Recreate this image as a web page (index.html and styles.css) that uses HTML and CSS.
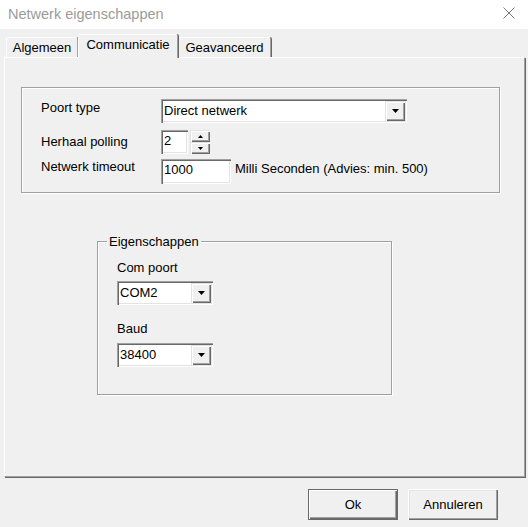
FILE: index.html
```html
<!DOCTYPE html>
<html>
<head>
<meta charset="utf-8">
<link rel="stylesheet" href="styles.css">
</head>
<body>
<div class="window">
  <div class="titlebar">
    <span class="title">Netwerk eigenschappen</span>
    <svg class="close" width="12" height="12" viewBox="0 0 12 12"><path d="M0.5 0.5L11.5 11.5M11.5 0.5L0.5 11.5" stroke="#7a7a7a" stroke-width="1" fill="none"/></svg>
  </div>
  <div class="client">
    <div class="tabs">
      <div class="tab tab-alg">Algemeen</div>
      <div class="tab tab-com selected">Communicatie</div>
      <div class="tab tab-gev">Geavanceerd</div>
    </div>
    <div class="panel">
      <div class="group1">
        <div class="row row1">
          <div class="label lab1">Poort type</div>
          <div class="combo combo-wide">
            <div class="combo-text">Direct netwerk</div>
            <div class="drop"><svg width="7" height="4" viewBox="0 0 7 4"><path d="M0 0H7L3.5 4Z" fill="#000"/></svg></div>
          </div>
        </div>
        <div class="row row2">
          <div class="label lab2">Herhaal polling</div>
          <div class="field field-spin">2</div>
          <div class="spin">
            <div class="spin-btn"><svg width="5" height="3" viewBox="0 0 5 3"><path d="M2.5 0L5 3H0Z" fill="#000"/></svg></div>
            <div class="spin-btn"><svg width="5" height="3" viewBox="0 0 5 3"><path d="M0 0H5L2.5 3Z" fill="#000"/></svg></div>
          </div>
        </div>
        <div class="row row3">
          <div class="label lab3">Netwerk timeout</div>
          <div class="field field-timeout">1000</div>
          <div class="unit">Milli Seconden (Advies: min. 500)</div>
        </div>
      </div>
      <div class="group2">
        <div class="legend">Eigenschappen</div>
        <div class="g2-label g2-com">Com poort</div>
        <div class="combo combo-small combo-com">
          <div class="combo-text">COM2</div>
          <div class="drop"><svg width="7" height="4" viewBox="0 0 7 4"><path d="M0 0H7L3.5 4Z" fill="#000"/></svg></div>
        </div>
        <div class="g2-label g2-baud">Baud</div>
        <div class="combo combo-small combo-baud">
          <div class="combo-text">38400</div>
          <div class="drop"><svg width="7" height="4" viewBox="0 0 7 4"><path d="M0 0H7L3.5 4Z" fill="#000"/></svg></div>
        </div>
      </div>
    </div>
    <div class="buttons">
      <div class="btn btn-default">Ok</div>
      <div class="btn">Annuleren</div>
    </div>
  </div>
</div>
</body>
</html>
```
FILE: styles.css
```css
html, body {
  margin: 0;
  padding: 0;
}
body {
  width: 528px;
  height: 527px;
  overflow: hidden;
  background: #f0f0f0;
  font-family: "Liberation Sans", Arial, sans-serif;
  font-size: 13px;
  color: #000;
}
.window {
  width: 528px;
  height: 527px;
  background: #f0f0f0;
}
.titlebar {
  height: 29px;
  box-sizing: border-box;
  background: #fff;
  display: flex;
  justify-content: space-between;
  align-items: flex-start;
  padding: 0 13px 0 8px;
}
.title {
  font-size: 14.5px;
  line-height: 28px;
  color: #9b9b9b;
}
.close {
  margin-top: 7px;
  display: block;
}
.client {
  padding: 5px 0 0 4px;
}
.tabs {
  display: flex;
  align-items: flex-end;
  height: 23px;
  padding-left: 2px;
  position: relative;
  z-index: 1;
}
.tab {
  height: 20px;
  box-sizing: border-box;
  border-top: 1px solid #fff;
  border-left: 1px solid #fff;
  border-right: 1px solid #a0a0a0;
  box-shadow: 1px 0 0 #696969;
  border-radius: 2px 2px 0 0;
  text-align: center;
  line-height: 19px;
  background: #f0f0f0;
  white-space: nowrap;
}
.tab-alg { width: 72px; }
.tab-com { width: 100px; }
.tab-gev { width: 93px; }
.tab.selected {
  height: 24px;
  margin-bottom: -1px;
  line-height: 20px;
  position: relative;
  z-index: 2;
}
.panel {
  width: 521px;
  height: 420px;
  box-sizing: border-box;
  border-top: 1px solid #fff;
  border-left: 1px solid #fff;
  border-right: 1px solid #a0a0a0;
  border-bottom: 1px solid #a0a0a0;
  box-shadow: 1px 1px 0 #696969;
  padding: 29px 0 0 16px;
}
.group1 {
  width: 479px;
  box-sizing: border-box;
  border: 1px solid #a0a0a0;
  box-shadow: inset 1px 1px 0 #fff, 1px 1px 0 #fff;
  padding: 11px 0 8px 19px;
}
.row {
  display: flex;
  align-items: flex-start;
}
.row2 { margin-top: 7px; }
.row3 { margin-top: 5px; }
.label {
  width: 120px;
  line-height: 15px;
  white-space: nowrap;
}
.lab1 { margin-top: 1px; }
.lab2 { margin-top: 4px; }
.lab3 { margin-top: 0; }
.sunken {
}
.combo, .field {
  box-sizing: border-box;
  background: #fff;
  border-top: 1px solid #a0a0a0;
  border-left: 1px solid #a0a0a0;
  border-right: 1px solid #fff;
  border-bottom: 1px solid #fff;
  box-shadow: inset 1px 1px 0 #696969, inset -1px -1px 0 #e3e3e3;
}
.combo {
  height: 24px;
  display: flex;
  padding: 2px 2px 2px 2px;
  border: none;
  box-shadow: inset 1px 1px 0 #a0a0a0, inset 2px 2px 0 #696969, inset -1px -1px 0 #fff, inset -2px -2px 0 #e3e3e3;
}
.combo-text {
  flex: 1;
  line-height: 20px;
  padding-left: 1px;
  white-space: nowrap;
}
.combo-wide { width: 246px; }
.combo-small { width: 96px; }
.drop {
  width: 20px;
  height: 20px;
  box-sizing: border-box;
  background: #f0f0f0;
  box-shadow: inset 1px 1px 0 #e3e3e3, inset 2px 2px 0 #fff, inset -1px -1px 0 #696969, inset -2px -2px 0 #a0a0a0;
  display: flex;
  align-items: center;
  justify-content: center;
}
.drop svg { display: block; }
.field {
  height: 24px;
  padding: 1px 2px 0 3px;
  line-height: 15px;
  border: none;
  box-shadow: inset 1px 1px 0 #a0a0a0, inset 2px 2px 0 #696969, inset -1px -1px 0 #fff, inset -2px -2px 0 #e3e3e3;
  padding-top: 3px;
}
.field-spin { width: 27px; }
.field-timeout { width: 70px; height: 25px; }
.spin {
  margin-left: 2px;
  width: 20px;
  height: 24px;
  display: flex;
  flex-direction: column;
}
.spin-btn {
  height: 12px;
  box-sizing: border-box;
  background: #f0f0f0;
  box-shadow: inset 1px 1px 0 #e3e3e3, inset 2px 2px 0 #fff, inset -1px -1px 0 #696969, inset -2px -2px 0 #a0a0a0;
  display: flex;
  align-items: center;
  justify-content: center;
}
.spin-btn svg { display: block; }
.unit {
  margin-left: 4px;
  margin-top: 2px;
  line-height: 15px;
  white-space: nowrap;
}
.group2 {
  margin-left: 76px;
  margin-top: 48px;
  width: 295px;
  height: 154px;
  box-sizing: border-box;
  border: 1px solid #a0a0a0;
  box-shadow: inset 1px 1px 0 #fff, 1px 1px 0 #fff;
  padding: 0 0 0 19px;
}
.legend {
  width: fit-content;
  margin: -8px 0 0 -10px;
  padding: 0 2px;
  line-height: 15px;
  background: #f0f0f0;
}
.g2-label {
  line-height: 15px;
}
.g2-com { margin-top: 11px; }
.combo-com { margin-top: 6px; }
.g2-baud { margin-top: 16px; }
.combo-baud { margin-top: 7px; }
.buttons {
  display: flex;
  justify-content: flex-end;
  gap: 10px;
  padding-right: 30px;
  margin-top: 12px;
}
.btn {
  width: 90px;
  height: 31px;
  box-sizing: border-box;
  background: #f0f0f0;
  box-shadow: inset 1px 1px 0 #fff, inset -1px -1px 0 #696969, inset -2px -2px 0 #a0a0a0, inset 2px 2px 0 #e3e3e3;
  display: flex;
  align-items: center;
  justify-content: center;
  line-height: 15px;
}
.btn-default {
  box-shadow: inset 0 0 0 1px #696969, inset 2px 2px 0 #fff, inset -2px -2px 0 #696969, inset -3px -3px 0 #a0a0a0;
}
```
